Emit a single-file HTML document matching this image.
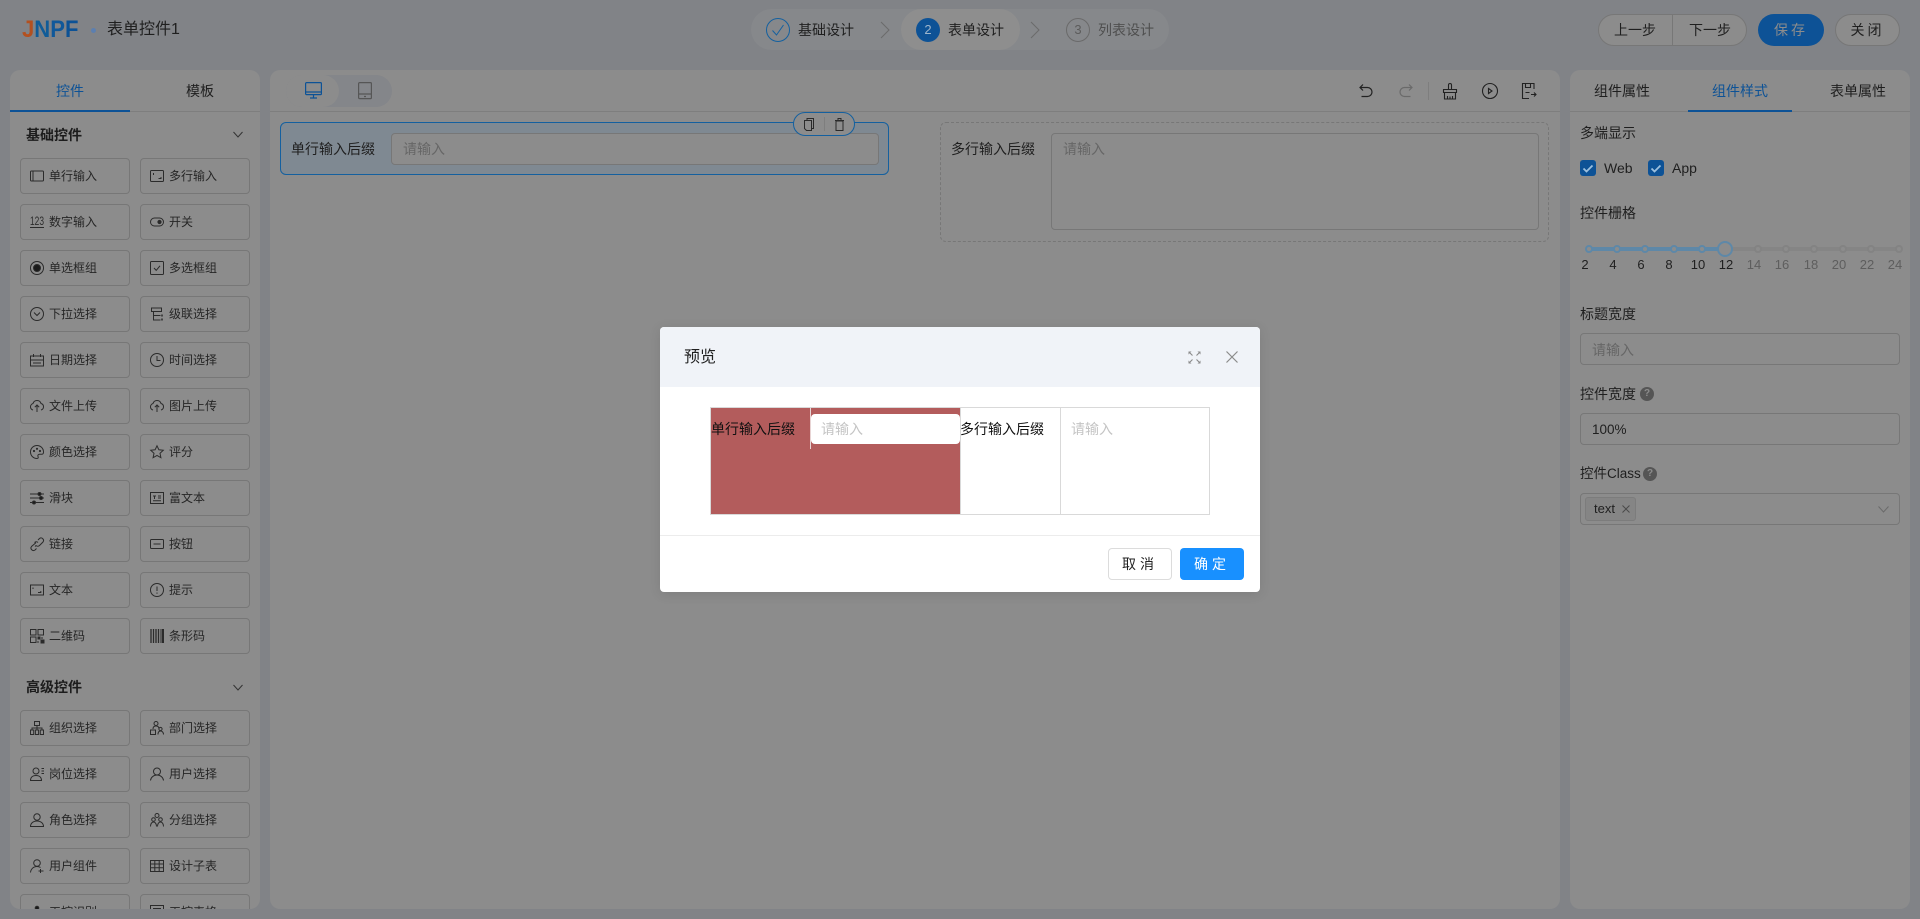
<!DOCTYPE html>
<html lang="zh"><head><meta charset="utf-8"><title>表单控件1</title>
<style>
*{box-sizing:border-box;margin:0;padding:0}
html,body{width:1920px;height:919px;overflow:hidden;background:#818387}
body{position:relative;font-family:"Liberation Sans","Noto Sans CJK SC",sans-serif;font-size:14px;color:#1f1f1f}
.a{position:absolute;white-space:nowrap}
.t{position:absolute;white-space:nowrap;line-height:20px;height:20px}
.c{transform:translateX(-50%)}
.panel{position:absolute;top:70px;height:839px;background:#8c8c8c;border-radius:10px;overflow:hidden}
.hr{position:absolute;left:0;right:0;top:41px;height:1px;background:#7e7e7e}
.it{position:absolute;width:110px;height:36px;border:1px solid #777;border-radius:4px;font-size:12px;line-height:34px;padding-left:28px;white-space:nowrap;color:#262626}
.it svg{position:absolute;left:9px;top:10px;width:14px;height:14px;fill:none;stroke:#2b2b2b;stroke-width:1}
.h{position:absolute;left:16px;font-weight:bold;font-size:14px;line-height:20px;color:#1c1c1c}
svg{display:block;overflow:visible}
.box{position:absolute;border:1px solid #777;border-radius:4px}
.ph{color:#666}
.ck{position:absolute;width:16px;height:16px;background:#0d5296;border-radius:3px}
.d{position:absolute;width:8px;height:8px;border-radius:50%;top:245px;background:#8c8c8c}
.on{border:2px solid #5e88a8}.off{border:2px solid #838383}
.n{position:absolute;top:255px;transform:translateX(-50%);line-height:20px;font-size:13px;color:#1f1f1f}
.n.g{color:#5e5e5e}
.q{position:absolute;width:14px;height:14px;border-radius:50%;background:#555;color:#8c8c8c;font-size:10px;font-weight:bold;line-height:14px;text-align:center}
#modal{position:absolute;left:660px;top:327px;width:600px;height:265px;background:#fff;border-radius:4px;overflow:hidden;box-shadow:0 2px 12px rgba(0,0,0,.1);color:#1f1f1f}
</style></head><body>

<!-- header -->
<div class="a" style="left:22px;top:15px;font-size:24px;line-height:30px;font-weight:bold;transform-origin:0 50%;transform:scaleX(.92)"><span style="color:#b3501f">J</span><span style="color:#115c98">N</span><span style="color:#10589a">P</span><span style="color:#0c5296">F</span></div>
<div class="a" style="left:91px;top:28px;width:5px;height:5px;border-radius:50%;background:#5c7fb0"></div>
<div class="t" style="left:107px;top:20px;font-size:16px;color:#1f1f1f">表单控件1</div>

<div class="a" style="left:751px;top:9px;width:418px;height:41px;border-radius:21px;background:#86888b"></div>
<div class="a" style="left:901px;top:9px;width:119px;height:41px;border-radius:21px;background:#8e8e8e"></div>
<svg class="a" style="left:766px;top:18px" width="24" height="24" fill="none" stroke="#14609f"><circle cx="12" cy="12" r="11.5"/><path d="M6.5 12.5l4 4.500 7-10"/></svg>
<div class="t" style="left:798px;top:20px">基础设计</div>
<svg class="a" style="left:880px;top:21px" width="10" height="18" fill="none" stroke="#6b6b6b"><path d="M1 1l8 8-8 8"/></svg>
<div class="a" style="left:916px;top:18px;width:24px;height:24px;border-radius:50%;background:#0d5296;color:#9eb6cc;text-align:center;line-height:24px;font-size:13px">2</div>
<div class="t" style="left:948px;top:20px">表单设计</div>
<svg class="a" style="left:1030px;top:21px" width="10" height="18" fill="none" stroke="#6b6b6b"><path d="M1 1l8 8-8 8"/></svg>
<div class="a" style="left:1066px;top:18px;width:24px;height:24px;border-radius:50%;border:1px solid #6a6a6a;color:#5c5c5c;text-align:center;line-height:22px;font-size:13px">3</div>
<div class="t" style="left:1098px;top:20px;color:#4f4f4f">列表设计</div>

<div class="a" style="left:1598px;top:14px;width:149px;height:32px;border-radius:16px;background:#8c8c8c;border:1px solid #777"></div>
<div class="a" style="left:1672px;top:15px;width:1px;height:30px;background:#777"></div>
<div class="t c" style="left:1635px;top:20px;font-size:14px">上一步</div>
<div class="t c" style="left:1710px;top:20px;font-size:14px">下一步</div>
<div class="a" style="left:1758px;top:14px;width:66px;height:32px;border-radius:16px;background:#0d5296;color:#8c8c8c;text-align:center;line-height:32px;letter-spacing:3px">保存</div>
<div class="a" style="left:1835px;top:14px;width:65px;height:32px;border-radius:16px;background:#8c8c8c;border:1px solid #777;text-align:center;line-height:30px;letter-spacing:3px">关闭</div>

<!-- left panel -->
<div class="panel" style="left:10px;width:250px">
  <div class="hr"></div>
  <div class="a" style="left:0;top:40px;width:120px;height:2px;background:#0d5296"></div>
  <div class="t c" style="left:60px;top:11px;color:#0d5296">控件</div>
  <div class="t c" style="left:190px;top:11px">模板</div>
  <div class="h" style="top:55px">基础控件</div>
  <svg class="a" style="left:223px;top:61px" width="10" height="7" fill="none" stroke="#333"><path d="M.5 1l4.500 5 4.500-5"/></svg>

  <div class="it" style="left:10px;top:88px"><svg viewBox="0 0 14 14"><rect x=".5" y="2" width="13" height="10" rx="1"/><path d="M3 2v10"/></svg>单行输入</div>
  <div class="it" style="left:130px;top:88px"><svg viewBox="0 0 14 14"><rect x=".5" y="1.500" width="13" height="11" rx="1"/><path d="M3.500 4v2M8.500 9.500h2.500V8"/></svg>多行输入</div>
  <div class="it" style="left:10px;top:134px"><svg viewBox="0 0 14 14"><text x="0" y="10" font-size="12" textLength="14" lengthAdjust="spacingAndGlyphs" fill="#2b2b2b" stroke="none" font-family="Liberation Sans">123</text><path d="M0 12.500h14"/></svg>数字输入</div>
  <div class="it" style="left:130px;top:134px"><svg viewBox="0 0 14 14"><rect x=".5" y="3" width="13" height="8" rx="4"/><circle cx="9.500" cy="7" r="1.600" fill="#2b2b2b"/></svg>开关</div>
  <div class="it" style="left:10px;top:180px"><svg viewBox="0 0 14 14"><circle cx="7" cy="7" r="6.500"/><circle cx="7" cy="7" r="3.500" fill="#1a1a1a"/></svg>单选框组</div>
  <div class="it" style="left:130px;top:180px"><svg viewBox="0 0 14 14"><rect x=".5" y=".5" width="13" height="13" rx="1"/><path d="M4 7l2.200 2.400L10 4.800"/></svg>多选框组</div>
  <div class="it" style="left:10px;top:226px"><svg viewBox="0 0 14 14"><circle cx="7" cy="7" r="6.500"/><path d="M4 5.500l3 3 3-3"/></svg>下拉选择</div>
  <div class="it" style="left:130px;top:226px"><svg viewBox="0 0 14 14"><path d="M1.500 1h10v3.500h-10zM3.500 4.500v8.500h7M3.500 8.500h7"/><path d="M12 7.500v2M12 11.500v2" stroke-width="1.500"/></svg>级联选择</div>
  <div class="it" style="left:10px;top:272px"><svg viewBox="0 0 14 14"><path d="M.5 3h13v10H.5zM3.500 1v3M10.500 1v3M.5 7h13M3 10h8"/></svg>日期选择</div>
  <div class="it" style="left:130px;top:272px"><svg viewBox="0 0 14 14"><circle cx="7" cy="7" r="6.500"/><path d="M7 3v4.500h3.500"/></svg>时间选择</div>
  <div class="it" style="left:10px;top:318px"><svg viewBox="0 0 14 14"><path d="M3 11C1.300 10.600.5 9.200.5 7.800.5 6 2 4.800 3 4.500 3.600 2.700 5.100 1.500 7 1.500s3.500 1.200 4 3c1.300.3 2.500 1.500 2.500 3.300 0 1.400-.8 2.800-2.500 3.200M7 13V6M4.800 8.200L7 6l2.200 2.200"/></svg>文件上传</div>
  <div class="it" style="left:130px;top:318px"><svg viewBox="0 0 14 14"><path d="M3 11C1.300 10.600.5 9.200.5 7.800.5 6 2 4.800 3 4.500 3.600 2.700 5.100 1.500 7 1.500s3.500 1.200 4 3c1.300.3 2.500 1.500 2.500 3.300 0 1.400-.8 2.800-2.500 3.200M7 13V6M4.800 8.200L7 6l2.200 2.200"/></svg>图片上传</div>
  <div class="it" style="left:10px;top:364px"><svg viewBox="0 0 14 14"><path d="M7 .5C3.400.5.500 3.400.500 7s2.900 6.500 6.500 6.500c1.200 0 1.600-1 1-2-.5-1 .1-2.300 1.500-2.300h2.500c1 0 1.500-.8 1.500-2.200C13.500 3.400 10.600.5 7 .5z"/><circle cx="4" cy="6" r=".6" fill="#2b2b2b"/><circle cx="7" cy="3.800" r=".6" fill="#2b2b2b"/><circle cx="10" cy="6" r=".6" fill="#2b2b2b"/></svg>颜色选择</div>
  <div class="it" style="left:130px;top:364px"><svg viewBox="0 0 14 14"><path d="M7 .8l1.900 4 4.400.5-3.300 3 .9 4.400L7 10.500l-3.900 2.200.9-4.400-3.300-3 4.400-.5z"/></svg>评分</div>
  <div class="it" style="left:10px;top:410px"><svg viewBox="0 0 14 14"><path d="M0 3h14M0 7h14M0 11.500h14"/><circle cx="9.500" cy="3" r="1.500" fill="#1a1a1a"/><circle cx="11" cy="7" r="1.500" fill="#1a1a1a"/><circle cx="4" cy="11.500" r="1.500" fill="#1a1a1a"/></svg>滑块</div>
  <div class="it" style="left:130px;top:410px"><svg viewBox="0 0 14 14"><rect x=".5" y="1.500" width="13" height="11"/><path d="M3 5h3M4.500 5v3M8 5h3M8 7h3M3 9.800h8"/></svg>富文本</div>
  <div class="it" style="left:10px;top:456px"><svg viewBox="0 0 14 14"><path d="M6 8.500L5 9.500M8 3l1.500-1.500a2.500 2.500 0 013.500 3.500L9.500 8.500A2.500 2.500 0 016 8.500M6 5.500l-1 1L1.500 9.500A2.500 2.500 0 005 13l1.500-1.500M8 5.500a2.500 2.500 0 00-3.500 0"/></svg>链接</div>
  <div class="it" style="left:130px;top:456px"><svg viewBox="0 0 14 14"><rect x=".5" y="2.500" width="13" height="9" rx="1"/><path d="M3.500 7h7"/></svg>按钮</div>
  <div class="it" style="left:10px;top:502px"><svg viewBox="0 0 14 14"><rect x=".5" y="2" width="13" height="10"/><path d="M3 4.500v1.500M8 9.500h2.800V8"/></svg>文本</div>
  <div class="it" style="left:130px;top:502px"><svg viewBox="0 0 14 14"><circle cx="7" cy="7" r="6.500"/><path d="M7 3.500v4.500M7 9.500v1.200"/></svg>提示</div>
  <div class="it" style="left:10px;top:548px"><svg viewBox="0 0 14 14"><rect x=".5" y=".5" width="5.500" height="5.500"/><rect x="8" y=".5" width="5.500" height="5.500"/><rect x=".5" y="8" width="5.500" height="5.500"/><path d="M8 8h2v2H8zM11 11h3v3h-3z" fill="#2b2b2b"/><path d="M12 8v2M8 12v2"/></svg>二维码</div>
  <div class="it" style="left:130px;top:548px"><svg viewBox="0 0 14 14"><path d="M1 0v14M3.500 0v14M6 0v14M8.500 0v14" stroke-width="1.300"/><path d="M11 0v14" stroke-width="1"/><path d="M13 0v14" stroke-width="2"/></svg>条形码</div>

  <div class="h" style="top:607px">高级控件</div>
  <svg class="a" style="left:223px;top:614px" width="10" height="7" fill="none" stroke="#333"><path d="M.5 1l4.500 5 4.500-5"/></svg>

  <div class="it" style="left:10px;top:640px"><svg viewBox="0 0 14 14"><rect x="4.500" y=".5" width="5" height="4"/><rect x=".5" y="9" width="3.200" height="4.500"/><rect x="5.400" y="9" width="3.200" height="4.500"/><rect x="10.300" y="9" width="3.200" height="4.500"/><path d="M7 4.500V9M2 9V7h10v2"/></svg>组织选择</div>
  <div class="it" style="left:130px;top:640px"><svg viewBox="0 0 14 14"><circle cx="6" cy="2.500" r="2"/><path d="M3 8c0-2 1.300-3 3-3s3 1 3 3"/><rect x=".5" y="9" width="5" height="4.500"/><circle cx="10.500" cy="8" r="1.600"/><path d="M8 13.500c0-2.300 1-3.500 2.500-3.500s3 1.200 3 3.500"/></svg>部门选择</div>
  <div class="it" style="left:10px;top:686px"><svg viewBox="0 0 14 14"><circle cx="6" cy="4" r="3"/><path d="M.5 13.500c0-3 2-5 5.500-5s5.500 2 5.500 5zM11.500 1.500h2.500M11.500 4h2.500M11.500 6.500h2.500"/></svg>岗位选择</div>
  <div class="it" style="left:130px;top:686px"><svg viewBox="0 0 14 14"><circle cx="7" cy="4.500" r="3.500"/><path d="M.5 13.500C.8 10.500 3.500 8 7 8s6.200 2.500 6.500 5.500"/></svg>用户选择</div>
  <div class="it" style="left:10px;top:732px"><svg viewBox="0 0 14 14"><circle cx="7" cy="4" r="3.200"/><path d="M.5 13.500c0-3 2.500-5.500 6.500-5.500s6.500 2.500 6.500 5.500z"/></svg>角色选择</div>
  <div class="it" style="left:130px;top:732px"><svg viewBox="0 0 14 14"><circle cx="7" cy="2.500" r="2"/><circle cx="3.500" cy="6.500" r="1.800"/><circle cx="10.500" cy="6.500" r="1.800"/><path d="M.5 13.500c0-2.500 1.200-4.500 3-4.500s3 2 3 4.500M7.500 13.500c0-2.500 1.200-4.500 3-4.500s3 2 3 4.500"/></svg>分组选择</div>
  <div class="it" style="left:10px;top:778px"><svg viewBox="0 0 14 14"><circle cx="7" cy="4" r="3.300"/><path d="M.5 13.500C.8 10 3.500 7.500 7 7.500c1.500 0 2.600.4 3.500 1M10.500 10v4M8.500 12h5"/></svg>用户组件</div>
  <div class="it" style="left:130px;top:778px"><svg viewBox="0 0 14 14"><path d="M.5 1.500h13v11H.5zM.5 5h13M.5 8.700h13M4.800 1.500v11M9.200 1.500v11"/></svg>设计子表</div>
  <div class="it" style="left:10px;top:824px"><svg viewBox="0 0 14 14"><circle cx="7" cy="3" r="1.800" fill="#1a1a1a"/></svg>工控识别</div>
  <div class="it" style="left:130px;top:824px"><svg viewBox="0 0 14 14"><rect x=".5" y=".5" width="13" height="12"/><path d="M3 3.500h8"/></svg>工控表格</div>
</div>

<!-- center panel -->
<div class="panel" style="left:270px;width:1290px">
  <div class="hr"></div>
  <div class="a" style="left:16px;top:5px;width:106px;height:32px;border-radius:16px;background:#84868a"></div>
  <div class="a" style="left:16px;top:5px;width:53px;height:32px;border-radius:16px;background:#8c8c8c"></div>
  <svg class="a" style="left:35px;top:12px" width="17" height="17" fill="none" stroke="#0d5296" stroke-width="1.200"><rect x=".6" y=".6" width="15.800" height="12" rx="1"/><path d="M.6 10h15.800M8.500 12.600v3.400M5 16h7"/></svg>
  <svg class="a" style="left:88px;top:12px" width="14" height="17" fill="none" stroke="#565656" stroke-width="1.200"><rect x=".6" y=".6" width="12.800" height="16" rx="1"/><path d="M.6 12h12.800M6 14.500h2"/></svg>

  <svg class="a" style="left:1089px;top:14px" width="14" height="14" fill="none" stroke="#222" stroke-width="1.200"><path d="M4 .5L1 3.500l3 3M1 3.500h7.500a4.500 4.500 0 010 9H2.500"/></svg>
  <svg class="a" style="left:1129px;top:14px" width="14" height="14" fill="none" stroke="#6a6a6a" stroke-width="1.200"><path d="M10 .5l3 3-3 3M13 3.500H5.500a4.500 4.500 0 000 9H11.500"/></svg>
  <div class="a" style="left:1158px;top:12px;width:1px;height:18px;background:#7e7e7e"></div>
  <svg class="a" style="left:1172px;top:13px" width="16" height="16" fill="none" stroke="#222" stroke-width="1.100"><path d="M6.500 6V2a1.500 1.500 0 013 0V6M1.500 6.500h13v3h-13zM2.500 9.500V16h11V9.500M5.500 16v-3M8 16v-2.500M10.500 16v-3"/></svg>
  <svg class="a" style="left:1212px;top:13px" width="16" height="16" fill="none" stroke="#222" stroke-width="1.100"><circle cx="8" cy="8" r="7.500"/><path d="M6.500 5.500l3.500 2.500-3.500 2.500z"/></svg>
  <svg class="a" style="left:1252px;top:13px" width="14" height="16" fill="none" stroke="#222" stroke-width="1.100"><path d="M12 6V.5H.5v15H7M3.500.5v4h5v-4M9 11.500h5M12 9.500l2 2-2 2M3.500 9.500h4"/></svg>

  <!-- selected -->
  <div class="a" style="left:10px;top:52px;width:609px;height:53px;border:1px solid #14609f;border-radius:6px;background:#7f8992"></div>
  <div class="t" style="left:21px;top:69px">单行输入后缀</div>
  <div class="box" style="left:121px;top:63px;width:488px;height:32px;background:#8c8c8c"></div>
  <div class="t ph" style="left:133px;top:69px">请输入</div>
  <div class="a" style="left:523px;top:42px;width:62px;height:24px;border:1px solid #14609f;border-radius:12px;background:#8c8c8c"></div>
  <div class="a" style="left:554px;top:47px;width:1px;height:14px;background:#7e7e7e"></div>
  <svg class="a" style="left:534px;top:48px" width="10" height="13" fill="none" stroke="#2a2a2a"><path d="M3 2V.5h6.500v10H7.500M.5 2.500h7v10H2.500L.5 10.500z"/></svg>
  <svg class="a" style="left:565px;top:48px" width="9" height="13" fill="none" stroke="#2a2a2a"><path d="M1 3h7v9.500H1zM0 2.500h9M3 2.500V.5h3v2"/></svg>

  <!-- dashed -->
  <div class="a" style="left:670px;top:52px;width:609px;height:120px;border:1px dashed #777;border-radius:6px"></div>
  <div class="t" style="left:681px;top:69px">多行输入后缀</div>
  <div class="box" style="left:781px;top:63px;width:488px;height:97px"></div>
  <div class="t ph" style="left:793px;top:69px">请输入</div>
</div>

<!-- right panel -->
<div class="panel" style="left:1570px;width:340px">
  <div class="hr"></div>
  <div class="a" style="left:118px;top:40px;width:104px;height:2px;background:#0d5296"></div>
  <div class="t c" style="left:52px;top:11px">组件属性</div>
  <div class="t c" style="left:170px;top:11px;color:#0d5296">组件样式</div>
  <div class="t c" style="left:288px;top:11px">表单属性</div>
</div>
<div class="t" style="left:1580px;top:123px">多端显示</div>
<div class="ck" style="left:1580px;top:160px"><svg width="16" height="16" fill="none" stroke="#9cc0df" stroke-width="1.800"><path d="M3.500 8.500l3 3 6-6"/></svg></div>
<div class="t" style="left:1604px;top:158px;font-size:14px">Web</div>
<div class="ck" style="left:1648px;top:160px"><svg width="16" height="16" fill="none" stroke="#9cc0df" stroke-width="1.800"><path d="M3.500 8.500l3 3 6-6"/></svg></div>
<div class="t" style="left:1672px;top:158px;font-size:14px">App</div>
<div class="t" style="left:1580px;top:203px">控件栅格</div>

<div class="a" style="left:1588px;top:247px;width:314px;height:4px;background:#858585;border-radius:2px"></div>
<div class="a" style="left:1588px;top:247px;width:136px;height:4px;background:#5e88a8;border-radius:2px"></div>
<div class="d on" style="left:1585px"></div><div class="d on" style="left:1613px"></div><div class="d on" style="left:1641px"></div><div class="d on" style="left:1670px"></div><div class="d on" style="left:1698px"></div>
<div class="d off" style="left:1754px"></div><div class="d off" style="left:1782px"></div><div class="d off" style="left:1810px"></div><div class="d off" style="left:1839px"></div><div class="d off" style="left:1867px"></div><div class="d off" style="left:1895px"></div>
<div class="a" style="left:1717px;top:241px;width:16px;height:16px;border-radius:50%;background:#8c8c8c;border:2px solid #5e88a8"></div>
<div class="n" style="left:1585px">2</div><div class="n" style="left:1613px">4</div><div class="n" style="left:1641px">6</div><div class="n" style="left:1669px">8</div><div class="n" style="left:1698px">10</div><div class="n" style="left:1726px">12</div>
<div class="n g" style="left:1754px">14</div><div class="n g" style="left:1782px">16</div><div class="n g" style="left:1811px">18</div><div class="n g" style="left:1839px">20</div><div class="n g" style="left:1867px">22</div><div class="n g" style="left:1895px">24</div>

<div class="t" style="left:1580px;top:304px">标题宽度</div>
<div class="box" style="left:1580px;top:333px;width:320px;height:32px"></div>
<div class="t ph" style="left:1592px;top:340px;font-size:14px">请输入</div>
<div class="t" style="left:1580px;top:384px">控件宽度</div>
<div class="q" style="left:1640px;top:387px">?</div>
<div class="box" style="left:1580px;top:413px;width:320px;height:32px"></div>
<div class="t" style="left:1592px;top:420px;font-size:13.500px">100%</div>
<div class="t" style="left:1580px;top:464px;font-size:13.500px">控件Class</div>
<div class="q" style="left:1643px;top:467px">?</div>
<div class="box" style="left:1580px;top:493px;width:320px;height:32px"></div>
<div class="a" style="left:1585px;top:497px;width:51px;height:24px;background:#858585;border:1px solid #7c7c7c;border-radius:3px"></div>
<div class="t" style="left:1594px;top:499px;font-size:13px">text</div>
<svg class="a" style="left:1622px;top:505px" width="8" height="8" fill="none" stroke="#4a4a4a"><path d="M.5.500l7 7M7.500.500l-7 7"/></svg>
<svg class="a" style="left:1878px;top:506px" width="11" height="7" fill="none" stroke="#6a6a6a"><path d="M.5.500l5 5.500 5-5.500"/></svg>

<!-- modal -->
<div id="modal">
  <div class="a" style="left:0;top:0;width:600px;height:60px;background:#f0f3f8"></div>
  <div class="a" style="left:24px;top:19px;font-size:16px;line-height:24px;color:#1f1f1f">预览</div>
  <svg class="a" style="left:528px;top:24px" width="13" height="13" fill="#8a8a8a" stroke="#8a8a8a" stroke-width="1.100"><path d="M2 2l2.500 2.500M11 2L8.500 4.500M2 11l2.500-2.500M11 11L8.500 8.500"/><path d="M.5.500h3l-3 3zM12.500.500h-3l3 3zM.5 12.500h3l-3-3zM12.500 12.500h-3l3-3z" stroke="none"/></svg>
  <svg class="a" style="left:566px;top:24px" width="12" height="12" fill="none" stroke="#8a8a8a" stroke-width="1.200"><path d="M.500.500l11 11M11.500.500l-11 11"/></svg>

  <div class="a" style="left:50px;top:80px;width:500px;height:108px;border:1px solid #d9d9d9"></div>
  <div class="a" style="left:51px;top:81px;width:249px;height:106px;background:#b35c5c"></div>
  <div class="a" style="left:150px;top:81px;width:1px;height:41px;background:#e8d4d4"></div>
  <div class="a" style="left:151px;top:87px;width:149px;height:30px;background:#fff;border-radius:4px"></div>
  <div class="a" style="left:300px;top:81px;width:1px;height:106px;background:#d9d9d9"></div>
  <div class="a" style="left:400px;top:81px;width:1px;height:106px;background:#d9d9d9"></div>
  <div class="t" style="left:51px;top:92px;color:#111">单行输入后缀</div>
  <div class="t" style="left:161px;top:92px;font-size:14px;color:#c4c4c4">请输入</div>
  <div class="t" style="left:300px;top:92px;color:#111">多行输入后缀</div>
  <div class="t" style="left:411px;top:92px;font-size:14px;color:#c4c4c4">请输入</div>

  <div class="a" style="left:0;top:208px;width:600px;height:1px;background:#ececec"></div>
  <div class="a" style="left:448px;top:221px;width:64px;height:32px;border:1px solid #dcdcdc;border-radius:4px;text-align:center;line-height:30px;letter-spacing:4px;background:#fff;color:#222">取消</div>
  <div class="a" style="left:520px;top:221px;width:64px;height:32px;border-radius:4px;text-align:center;line-height:32px;letter-spacing:4px;background:#1890ff;color:#fff">确定</div>
</div>
</body></html>
